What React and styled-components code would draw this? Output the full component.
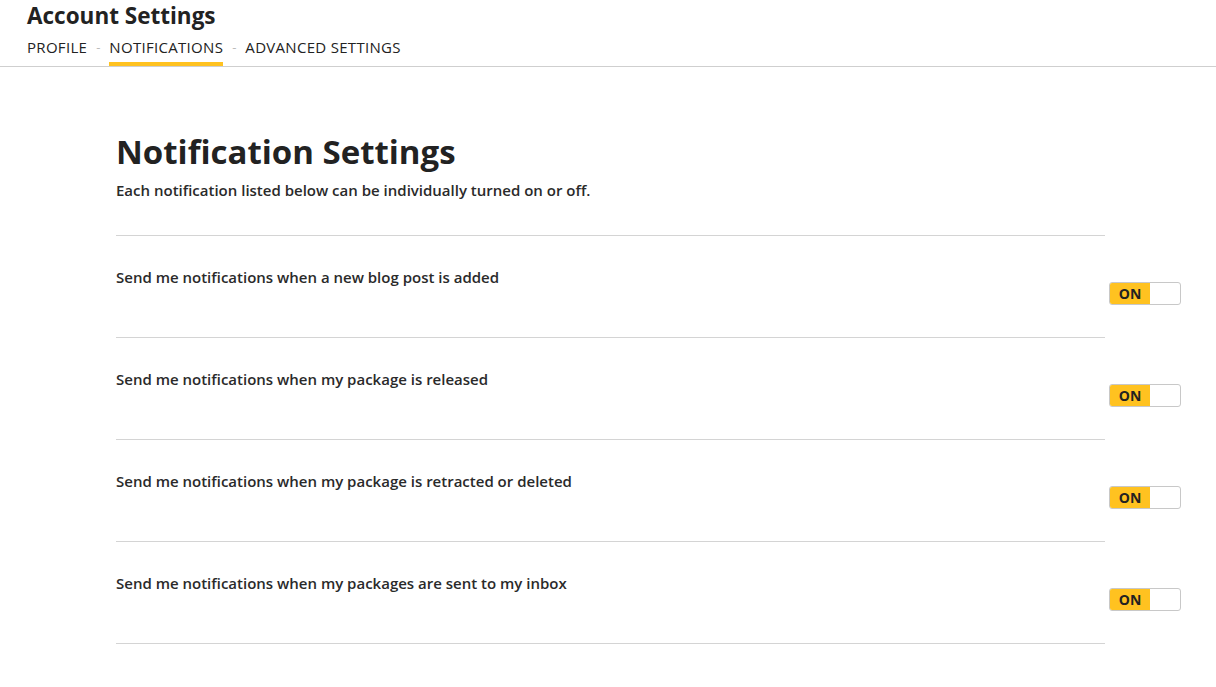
import React, { useState } from 'react';
import styled, { createGlobalStyle } from 'styled-components';

const GlobalStyle = createGlobalStyle`
  body {
    margin: 0;
    background: #fff;
    font-family: "Open Sans", "Noto Sans", sans-serif;
    color: #2a2a2a;
  }
`;

const Header = styled.header`
  border-bottom: 1px solid #cfcfcf;
  padding: 2px 27px 0;
`;

const PageTitle = styled.h1`
  margin: 0;
  font-size: 22.5px;
  line-height: 28px;
  font-weight: 700;
  color: #222;
`;

const Tabs = styled.nav`
  display: flex;
  align-items: center;
  gap: 9px;
  margin-top: 7px;
`;

const Tab = styled.a`
  font-size: 15px;
  font-weight: 400;
  letter-spacing: 0.3px;
  line-height: 20px;
  color: #222;
  padding-bottom: 5px;
  border-bottom: 4px solid ${(p) => (p.active ? '#ffc220' : 'transparent')};
  cursor: pointer;
`;

const Dash = styled.span`
  color: #bbb;
  font-size: 13px;
  padding-bottom: 9px;
`;

const Main = styled.main`
  width: 989px;
  margin: 0 0 0 116px;
  padding-top: 63px;
`;

const Heading = styled.h2`
  margin: 0;
  font-size: 33px;
  line-height: 44px;
  font-weight: 700;
  color: #222;
`;

const Intro = styled.p`
  margin: 6px 0 0;
  font-size: 15px;
  font-weight: 600;
  line-height: 20px;
`;

const List = styled.div`
  margin-top: 35px;
  border-top: 1px solid #d4d4d4;
`;

const Row = styled.div`
  display: flex;
  justify-content: space-between;
  height: 102px;
  box-sizing: border-box;
  padding-top: 31px;
  border-bottom: 1px solid #d4d4d4;
`;

const Label = styled.span`
  font-size: 15px;
  font-weight: 600;
  line-height: 20px;
`;

const Toggle = styled.button`
  display: flex;
  width: 72px;
  height: 23px;
  margin-top: 15px;
  margin-right: -76px;
  padding: 0;
  border: 1px solid #c8c8c8;
  border-radius: 3px;
  background: #fff;
  overflow: hidden;
  cursor: pointer;
  font-family: inherit;
`;

const ToggleOn = styled.span`
  width: 40px;
  height: 100%;
  background: ${(p) => (p.on ? '#ffc220' : '#fff')};
  font-size: 14px;
  font-weight: 700;
  line-height: 21px;
  color: #222;
  text-align: center;
`;

const notifications = [
  'Send me notifications when a new blog post is added',
  'Send me notifications when my package is released',
  'Send me notifications when my package is retracted or deleted',
  'Send me notifications when my packages are sent to my inbox',
];

export default function App() {
  const [states, setStates] = useState(notifications.map(() => true));

  const flip = (i) => setStates(states.map((s, j) => (j === i ? !s : s)));

  return (
    <>
      <GlobalStyle />
      <Header>
        <PageTitle>Account Settings</PageTitle>
        <Tabs>
          <Tab>PROFILE</Tab>
          <Dash>-</Dash>
          <Tab active>NOTIFICATIONS</Tab>
          <Dash>-</Dash>
          <Tab>ADVANCED SETTINGS</Tab>
        </Tabs>
      </Header>
      <Main>
        <Heading>Notification Settings</Heading>
        <Intro>Each notification listed below can be individually turned on or off.</Intro>
        <List>
          {notifications.map((text, i) => (
            <Row key={text}>
              <Label>{text}</Label>
              <Toggle onClick={() => flip(i)}>
                <ToggleOn on={states[i]}>{states[i] ? 'ON' : ''}</ToggleOn>
              </Toggle>
            </Row>
          ))}
        </List>
      </Main>
    </>
  );
}
